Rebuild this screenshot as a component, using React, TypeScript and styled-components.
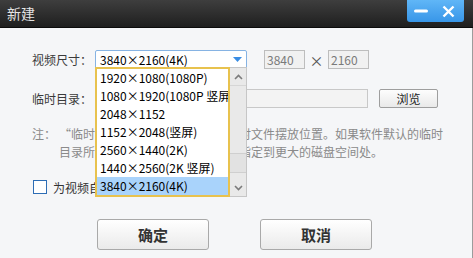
import styled, { createGlobalStyle } from 'styled-components'
import { ReactElement } from 'react'

const GlobalStyle = createGlobalStyle`
  html, body {
    margin: 0;
    padding: 0;
    background: #f5f6f8;
  }
  body {
    font-family: "Noto Sans CJK SC", "Microsoft YaHei", sans-serif;
  }
`

const Window = styled.div`
  width: 473px;
  height: 258px;
  display: flex;
  flex-direction: column;
  overflow: hidden;
  background: #f5f6f8;
`

const TitleBar = styled.div`
  flex: none;
  height: 28px;
  box-sizing: border-box;
  display: flex;
  align-items: flex-start;
  justify-content: space-between;
  background: linear-gradient(#3e3e3e, #1f1f1f);
  border-bottom: 1px solid #0c0c0c;
`

const Title = styled.span`
  padding-left: 7px;
  font-size: 14px;
  line-height: 27px;
  color: #e4e4e4;
`

const WinButtons = styled.div`
  width: 57px;
  height: 22px;
  margin-right: 9px;
  display: flex;
  align-items: center;
  padding: 0 9px 0 7px;
  box-sizing: border-box;
  justify-content: space-between;
  background: linear-gradient(#60b6f7, #3896e8);
  border-radius: 0 0 3px 3px;
`

const Body = styled.div`
  flex: 1;
  display: flex;
  flex-direction: column;
  padding: 22px 0 0 32px;
  border-right: 1px solid #9c9c9c;
  font-size: 12px;
  color: #333;
`

const Row = styled.div<{ $top?: number }>`
  display: flex;
  align-items: center;
  height: 19px;
  margin-top: ${({ $top }) => $top ?? 0}px;
`

const Label = styled.span`
  width: 63px;
  flex: none;
  line-height: 19px;
  color: #3a3a3a;
`

const Select = styled.div`
  position: relative;
  width: 152px;
  height: 19px;
  box-sizing: border-box;
  display: flex;
  align-items: center;
  padding-left: 4px;
  background: #fff;
  border: 1px solid #86b3e3;
  border-radius: 2px;
  color: #000;
`

const Arrow = styled.svg`
  margin-left: auto;
  margin-right: 4px;
`

const Dropdown = styled.div`
  position: absolute;
  top: 16px;
  left: -1px;
  display: flex;
  z-index: 5;
`

const List = styled.div`
  width: 135px;
  box-sizing: border-box;
  border: 2px solid #e8c24e;
  background: #fff;
  overflow: hidden;
`

const Item = styled.div<{ $selected?: boolean }>`
  height: 18px;
  line-height: 18px;
  padding-left: 3px;
  white-space: nowrap;
  color: #000;
  background: ${({ $selected }) => ($selected ? '#a9d3fb' : 'transparent')};
`

const Mul = styled.span`
  display: inline-block;
  width: 12px;
  text-align: center;
`

const ScrollBar = styled.div`
  width: 17px;
  box-sizing: border-box;
  display: flex;
  flex-direction: column;
  background: #e9e9e9;
  border: 1px solid #c6c6c6;
  border-left: none;
`

const ScrollBtn = styled.div`
  height: 17px;
  flex: none;
  display: flex;
  align-items: center;
  justify-content: center;
`

const Track = styled.div`
  flex: 1;
  display: flex;
  flex-direction: column;
  justify-content: flex-end;
  padding-bottom: 6px;
  border-top: 1px solid #d6d6d6;
`

const Thumb = styled.div`
  height: 18px;
  background: #e2e2e2;
  border-top: 1px solid #cfcfcf;
  border-bottom: 1px solid #cfcfcf;
`

const NumBox = styled.div<{ $gap?: number }>`
  width: 41px;
  height: 19px;
  box-sizing: border-box;
  margin-left: ${({ $gap }) => $gap ?? 0}px;
  padding-left: 2px;
  line-height: 17px;
  background: #f1f1f1;
  border: 1px solid #bdbdbd;
  color: #7a7a7a;
`

const Times = styled.span`
  width: 23px;
  text-align: center;
  font-size: 14px;
  color: #555;
`

const PathInput = styled.div`
  width: 273px;
  height: 19px;
  box-sizing: border-box;
  background: #f3f3f3;
  border: 1px solid #c8c8c8;
`

const SmallButton = styled.div`
  width: 59px;
  height: 19px;
  margin-left: 11px;
  box-sizing: border-box;
  display: flex;
  align-items: center;
  justify-content: center;
  background: linear-gradient(#fdfdfd, #e9e9e9);
  border: 1px solid #9e9e9e;
  border-radius: 2px;
  color: #222;
`

const Note = styled.div`
  display: flex;
  margin-top: 17px;
  line-height: 18px;
  color: #8a8a8a;
`

const NoteLabel = styled.span`
  width: 27px;
  flex: none;
`

const NoteLine = styled.div`
  white-space: nowrap;
`

const CheckRow = styled.div`
  display: flex;
  align-items: center;
  margin-top: 19px;
  height: 14px;
`

const CheckBox = styled.span`
  width: 14px;
  height: 14px;
  margin-left: 1px;
  box-sizing: border-box;
  background: #fff;
  border: 1px solid #2d6db5;
`

const CheckLabel = styled.span`
  margin-left: 6px;
  color: #333;
`

const Footer = styled.div`
  display: flex;
  gap: 51px;
  margin-top: 25px;
  padding-left: 65px;
`

const DialogButton = styled.div`
  width: 112px;
  height: 31px;
  box-sizing: border-box;
  display: flex;
  align-items: center;
  justify-content: center;
  background: linear-gradient(#ffffff, #eaeaea);
  border: 1px solid #a9a9a9;
  border-radius: 3px;
  font-size: 15px;
  font-weight: bold;
  color: #333;
`

const sizes = [
  '1920×1080(1080P)',
  '1080×1920(1080P 竖屏)',
  '2048×1152',
  '1152×2048(竖屏)',
  '2560×1440(2K)',
  '1440×2560(2K 竖屏)',
  '3840×2160(4K)',
]

const Res = ({ text }: { text: string }): ReactElement => {
  const [a, b] = text.split('×')
  return (
    <>
      {a}
      <Mul>×</Mul>
      {b}
    </>
  )
}

const Chevron = ({ up }: { up?: boolean }): ReactElement => (
  <svg width="9" height="6" viewBox="0 0 9 6">
    <polyline
      points={up ? '1,5 4.5,1.5 8,5' : '1,1 4.5,4.5 8,1'}
      fill="none"
      stroke="#7b7b7b"
      strokeWidth="1.6"
    />
  </svg>
)

export default function App(): ReactElement {
  return (
    <Window>
      <GlobalStyle />
      <TitleBar>
        <Title>新建</Title>
        <WinButtons>
          <svg width="14" height="4" viewBox="0 0 14 4">
            <line x1="1.5" y1="2" x2="12.5" y2="2" stroke="#fff" strokeWidth="3" strokeLinecap="round" />
          </svg>
          <svg width="13" height="13" viewBox="0 0 13 13">
            <path d="M1.5 1.5 L11.5 11.5 M11.5 1.5 L1.5 11.5" stroke="#fff" strokeWidth="2.4" />
          </svg>
        </WinButtons>
      </TitleBar>
      <Body>
        <Row>
          <Label>视频尺寸：</Label>
          <Select>
            <Res text="3840×2160(4K)" />
            <Arrow width="9" height="5" viewBox="0 0 9 5">
              <polygon points="0,0 9,0 4.5,5" fill="#3a8de4" />
            </Arrow>
            <Dropdown>
              <List>
                {sizes.map((s, i) => (
                  <Item key={s} $selected={i === sizes.length - 1}>
                    <Res text={s} />
                  </Item>
                ))}
              </List>
              <ScrollBar>
                <ScrollBtn>
                  <Chevron up />
                </ScrollBtn>
                <Track>
                  <Thumb />
                </Track>
                <ScrollBtn>
                  <Chevron />
                </ScrollBtn>
              </ScrollBar>
            </Dropdown>
          </Select>
          <NumBox $gap={17}>3840</NumBox>
          <Times>×</Times>
          <NumBox>2160</NumBox>
        </Row>
        <Row $top={20}>
          <Label>临时目录：</Label>
          <PathInput />
          <SmallButton>浏览</SmallButton>
        </Row>
        <Note>
          <NoteLabel>注：</NoteLabel>
          <div>
            <NoteLine>“临时目录”为软件运行时所用临时文件摆放位置。如果软件默认的临时</NoteLine>
            <NoteLine>目录所在的磁盘空间不足，请将其指定到更大的磁盘空间处。</NoteLine>
          </div>
        </Note>
        <CheckRow>
          <CheckBox />
          <CheckLabel>为视频自动生成封面</CheckLabel>
        </CheckRow>
        <Footer>
          <DialogButton>确定</DialogButton>
          <DialogButton>取消</DialogButton>
        </Footer>
      </Body>
    </Window>
  )
}
